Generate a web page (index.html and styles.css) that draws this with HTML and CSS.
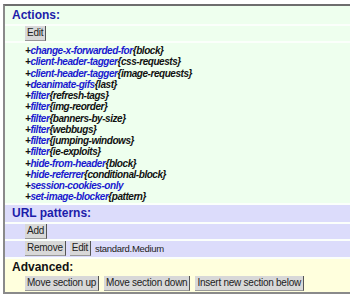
FILE: index.html
```html
<!DOCTYPE html>
<html>
<head>
<meta charset="utf-8">
<link rel="stylesheet" href="styles.css">
</head>
<body>
<div class="frame">
  <div class="row green head"><span class="title">Actions:</span></div>
  <div class="row green btnrow"><button class="btn">Edit</button></div>
  <div class="row green list">
    <div class="item">+<span class="act">change-x-forwarded-for</span>{block}</div>
    <div class="item">+<span class="act">client-header-tagger</span>{css-requests}</div>
    <div class="item">+<span class="act">client-header-tagger</span>{image-requests}</div>
    <div class="item">+<span class="act">deanimate-gifs</span>{last}</div>
    <div class="item">+<span class="act">filter</span>{refresh-tags}</div>
    <div class="item">+<span class="act">filter</span>{img-reorder}</div>
    <div class="item">+<span class="act">filter</span>{banners-by-size}</div>
    <div class="item">+<span class="act">filter</span>{webbugs}</div>
    <div class="item">+<span class="act">filter</span>{jumping-windows}</div>
    <div class="item">+<span class="act">filter</span>{ie-exploits}</div>
    <div class="item">+<span class="act">hide-from-header</span>{block}</div>
    <div class="item">+<span class="act">hide-referrer</span>{conditional-block}</div>
    <div class="item">+<span class="act">session-cookies-only</span></div>
    <div class="item">+<span class="act">set-image-blocker</span>{pattern}</div>
  </div>
  <div class="row blue head short"><span class="title">URL patterns:</span></div>
  <div class="row blue btnrow"><button class="btn">Add</button></div>
  <div class="row blue btnrow tall"><button class="btn">Remove</button><button class="btn">Edit</button><span class="pattern">standard.Medium</span></div>
  <div class="row yellow adv">
    <div class="head"><span class="title dark">Advanced:</span></div>
    <div class="btnrow"><button class="btn">Move section up</button><button class="btn">Move section down</button><button class="btn">Insert new section below</button></div>
  </div>
</div>
</body>
</html>
```
FILE: styles.css
```css
html, body { margin: 0; padding: 0; background: #ffffff; }
body { font-family: "Liberation Sans", Arial, sans-serif; width: 350px; height: 295px; overflow: hidden; }
.frame {
  margin: 4px 0 0 3px;
  width: 400px;
  border-top: 2px solid #6e6e6e;
  border-left: 2px solid #8a8a8a;
  border-bottom: 2px solid #8a8a8a;
  background: #fbfffb;
  display: flex;
  flex-direction: column;
  gap: 2px;
}
.row { padding-left: 7px; }
.green { background: #eeffee; }
.blue { background: #dcdcfb; }
.yellow { background: #ffffdd; }
.head { height: 18px; display: flex; align-items: center; }
.head.short { height: 17px; }
.title { font-weight: bold; font-size: 12px; color: #1c1caa; }
.title.dark { color: #111; }
.btnrow { padding-left: 13px; height: 15px; display: flex; align-items: center; gap: 4px; }
.row.btnrow { padding-left: 20px; }
.row.btnrow.tall { height: 16px; }
.btn {
  font-family: "Liberation Sans", Arial, sans-serif;
  font-size: 10px;
  letter-spacing: -0.25px;
  color: #222;
  background: #d8d8d8;
  border: none;
  border-right: 1px solid #555;
  border-bottom: 1px solid #999;
  padding: 0 2px 0 2px;
  height: 15px;
  line-height: 14px;
  margin: 0;
}
.pattern { font-size: 9.5px; letter-spacing: -0.3px; color: #222; padding-left: 0; }
.list { padding: 2px 0 0 20px; }
.item {
  font-size: 10px;
  letter-spacing: -0.45px;
  font-weight: bold;
  font-style: italic;
  color: #111;
  line-height: 11.25px;
  white-space: nowrap;
}
.act { color: #1a1ad0; }
.adv { padding-bottom: 1px; }
.adv .head { height: 17px; }
.adv .btnrow { gap: 5px; }
```
